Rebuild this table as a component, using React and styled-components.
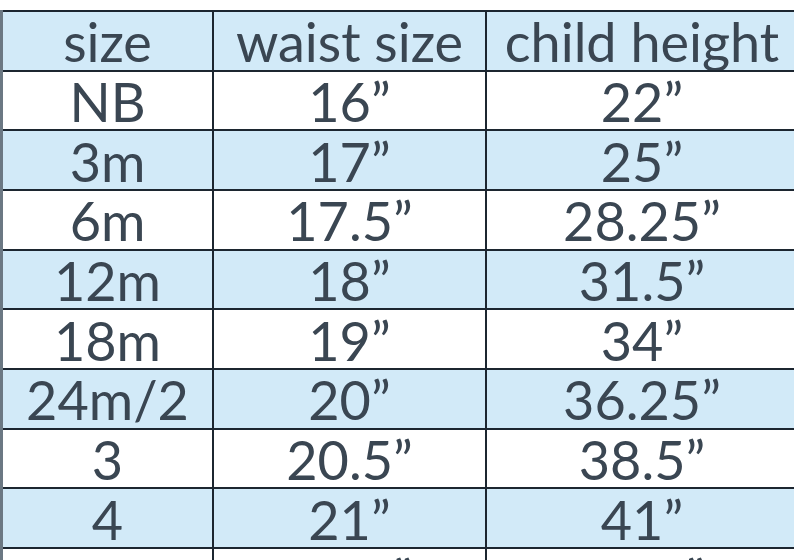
import React from "react";
import styled, { createGlobalStyle } from "styled-components";

const Global = createGlobalStyle`
  html, body { margin: 0; padding: 0; background: #ffffff; }
  body { font-family: "Lato", "Open Sans", sans-serif; overflow: hidden; }
`;

const Page = styled.div`
  width: 794px;
  height: 560px;
  overflow: hidden;
  padding-top: 10px;
  box-sizing: border-box;
  background: #fff;
`;

const Table = styled.div`
  width: 800px;
  border-left: 3px solid #6b7883;
  display: flex;
  flex-direction: column;
`;

const Row = styled.div`
  display: grid;
  grid-template-columns: 211px 273px 1fr;
  height: 59.67px;
  box-sizing: border-box;
  border-top: 2px solid #1c2630;
  background: ${(p) => (p.$shaded ? "#d2eaf8" : "#ffffff")};
`;

const Cell = styled.div`
  display: flex;
  align-items: center;
  justify-content: center;
  padding-top: 3px;
  font-size: 54px;
  font-weight: 400;
  line-height: 1;
  color: #3a4652;
  border-right: ${(p) => (p.$last ? "none" : "2px solid #1c2630")};
  padding-right: ${(p) => (p.$last ? "6px" : "0")};
  white-space: nowrap;
`;

const rows = [
  ["size", "waist size", "child height"],
  ["NB", "16”", "22”"],
  ["3m", "17”", "25”"],
  ["6m", "17.5”", "28.25”"],
  ["12m", "18”", "31.5”"],
  ["18m", "19”", "34”"],
  ["24m/2", "20”", "36.25”"],
  ["3", "20.5”", "38.5”"],
  ["4", "21”", "41”"],
  ["5", "21.5”", "43.5”"],
];

export default function App() {
  return (
    <Page>
      <Global />
      <Table>
        {rows.map((r, i) => (
          <Row key={i} $shaded={i % 2 === 0 && i < 9}>
            {r.map((c, j) => (
              <Cell key={j} $last={j === 2}>
                {c}
              </Cell>
            ))}
          </Row>
        ))}
      </Table>
    </Page>
  );
}
